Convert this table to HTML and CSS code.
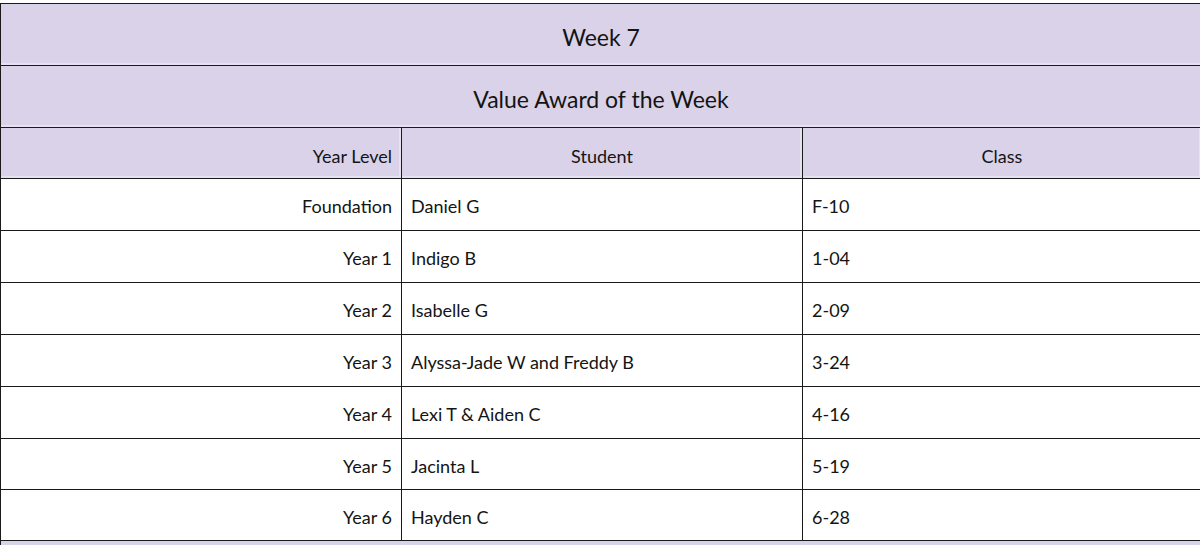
FILE: index.html
```html
<!DOCTYPE html>
<html>
<head>
<meta charset="utf-8">
<link rel="stylesheet" href="styles.css">
</head>
<body>
<div class="wrap">
<table class="awards">
  <colgroup><col class="c1"><col class="c2"><col class="c3"></colgroup>
  <tr class="title"><td colspan="3">Week 7</td></tr>
  <tr class="title"><td colspan="3">Value Award of the Week</td></tr>
  <tr class="head"><td class="r">Year Level</td><td class="c">Student</td><td class="c">Class</td></tr>
  <tr class="row"><td class="r">Foundation</td><td>Daniel G</td><td>F-10</td></tr>
  <tr class="row"><td class="r">Year 1</td><td>Indigo B</td><td>1-04</td></tr>
  <tr class="row"><td class="r">Year 2</td><td>Isabelle G</td><td>2-09</td></tr>
  <tr class="row"><td class="r">Year 3</td><td>Alyssa-Jade W and Freddy B</td><td>3-24</td></tr>
  <tr class="row"><td class="r">Year 4</td><td>Lexi T &amp; Aiden C</td><td>4-16</td></tr>
  <tr class="row short"><td class="r">Year 5</td><td>Jacinta L</td><td>5-19</td></tr>
  <tr class="row short"><td class="r">Year 6</td><td>Hayden C</td><td>6-28</td></tr>
  <tr class="title"><td colspan="3">&nbsp;</td></tr>
</table>
</div>
</body>
</html>
```
FILE: styles.css
```css
html, body {
  margin: 0;
  padding: 0;
  background: #ffffff;
  overflow: hidden;
}
.wrap {
  padding-top: 3px;
  width: 1202px;
}
.awards {
  border-collapse: collapse;
  width: 1201px;
  table-layout: fixed;
  font-family: Lato, "Noto Sans", sans-serif;
  color: #141414;
}
.c1 { width: 401px; }
.c2 { width: 401px; }
.c3 { width: 399px; }
.awards td {
  border: 1px solid #1a1a1a;
  padding: 3px 9px 0;
  font-size: 18px;
  vertical-align: middle;
  white-space: nowrap;
  overflow: hidden;
}
.title td {
  background: #d9d2e9;
  text-align: center;
  font-size: 23px;
  height: 56px;
  padding-top: 5px;
  box-shadow: inset 0 -2px 0 #e6e1f1;
}
.head td {
  background: #d9d2e9;
  height: 45px;
  padding-top: 5px;
  box-shadow: inset 0 -2px 0 #e6e1f1, inset -2px 0 0 #e6e1f1;
}
.row td {
  height: 48px;
}
.row.short td {
  height: 47px;
}
.r { text-align: right; }
.c { text-align: center; }
```
